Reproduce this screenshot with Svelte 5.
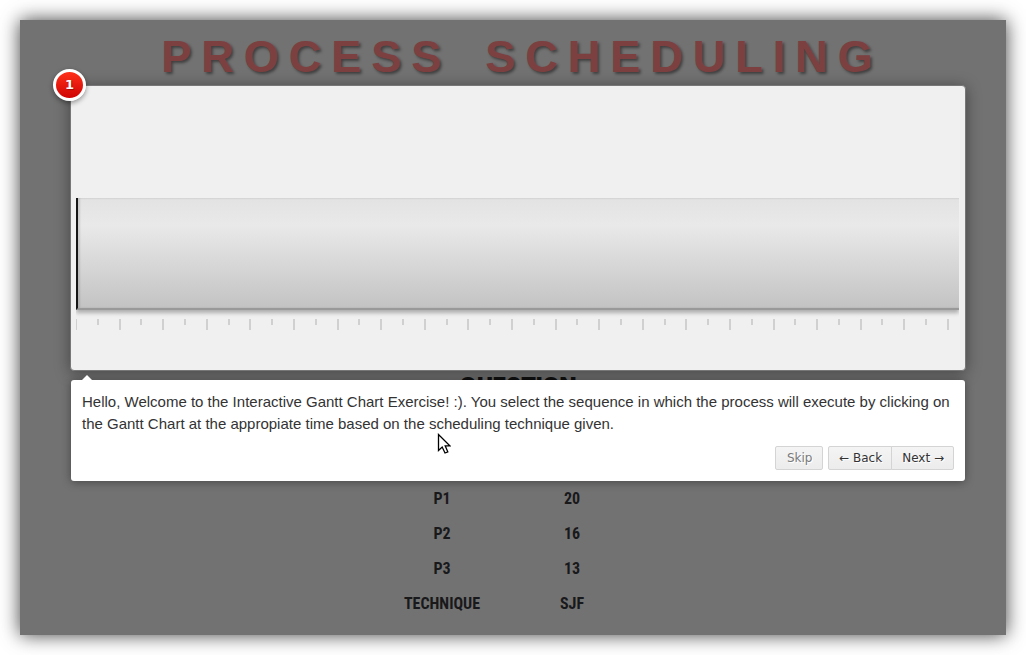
<script>
  const rows = [
    ['P1', '20'],
    ['P2', '16'],
    ['P3', '13'],
    ['TECHNIQUE', 'SJF'],
  ];
  const ticks = Array.from({ length: 41 }, (_, i) => i % 2 === 0);
</script>

<main>
  <h1><span>PROCESS</span> <span>SCHEDULING</span></h1>

  <div class="stage">
    <section class="chart" aria-label="Gantt chart">
      <button class="bar" aria-label="Timeline"></button>
      <div class="scale">
        {#each ticks as major}
          <i class:major></i>
        {/each}
      </div>
    </section>

    <span class="step">1</span>

    <div class="tip" role="dialog" aria-label="Step 1">
      <p>
        Hello, Welcome to the Interactive Gantt Chart Exercise! :). You select the sequence in which
        the process will execute by clicking on the Gantt Chart at the appropiate time based on the
        scheduling technique given.
      </p>
      <div class="actions">
        <button class="skip">Skip</button>
        <div class="pair">
          <button>← Back</button>
          <button>Next →</button>
        </div>
      </div>
    </div>
  </div>

  <h2>QUESTION</h2>
  <table>
    <tbody>
      {#each rows as [name, value]}
        <tr><th scope="row">{name}</th><td>{value}</td></tr>
      {/each}
    </tbody>
  </table>

  <svg class="pointer" width="14" height="22" viewBox="0 0 14 22" aria-hidden="true">
    <path d="M1.5 1.5V17.5L5.2 14L8 20L10.8 18.8L8.2 12.8H12.8Z" fill="#fff" stroke="#000" stroke-width="1.3" />
  </svg>
</main>

<style>
  :global(body) {
    background: #fff;
    font-family: 'Liberation Sans', Arial, sans-serif;
  }
  main {
    position: relative;
    margin: 20px;
    padding: 0 40px 14px 50px;
    background: #727272;
    box-shadow: 0 0 18px rgba(0, 0, 0, 0.75);
    color: #19191b;
  }
  h1 {
    display: flex;
    justify-content: center;
    gap: 34px;
    margin: 0;
    padding: 12px 0 0 8px;
    font-size: 45px;
    line-height: 50px;
    letter-spacing: 10px;
    color: #7c4040;
    text-shadow: 2px 2px 3px rgba(0, 0, 0, 0.45);
  }
  .stage {
    position: relative;
    margin: 3px 0 0;
  }
  .chart {
    box-sizing: border-box;
    padding: 112px 6px 40px 5px;
    border: 1px solid #777;
    border-radius: 4px;
    background: #f0f0f0;
    box-shadow: 0 2px 15px rgba(0, 0, 0, 0.4);
    overflow: hidden;
  }
  .bar {
    display: block;
    width: 100%;
    height: 112px;
    padding: 0;
    border: 0;
    border-left: 2px solid #161616;
    border-bottom: 2px solid #999;
    background: linear-gradient(#dadada, #e3e3e3 2px, #e9e9e9 25%, #c3c3c3);
    box-shadow:
      inset 2px 0 2px rgba(0, 0, 0, 0.12),
      0 3px 4px rgba(0, 0, 0, 0.28);
    clip-path: inset(0 0 -8px 0);
  }
  .scale {
    display: flex;
    justify-content: space-between;
    height: 11px;
    margin-top: 9px;
    padding-right: 10px;
    overflow: hidden;
  }
  .scale i {
    width: 2px;
    height: 6px;
    background: #d0d0d0;
  }
  .scale .major {
    height: 11px;
  }
  .scale i:first-child {
    width: 1px;
  }
  .step {
    position: absolute;
    top: -16px;
    left: -17px;
    box-sizing: border-box;
    width: 33px;
    height: 32px;
    border: 3px solid #fff;
    border-radius: 50%;
    background: linear-gradient(#ff3019, #cf0404);
    box-shadow: 0 2px 5px rgba(0, 0, 0, 0.4);
    color: #fff;
    font: bold 13px/26px 'DejaVu Sans', Verdana, sans-serif;
    text-align: center;
    text-shadow: 1px 1px 1px rgba(0, 0, 0, 0.3);
  }
  .tip {
    position: absolute;
    top: calc(100% + 9px);
    left: 1px;
    right: 1px;
    padding: 11px;
    border-radius: 3px;
    background: #fff;
    box-shadow: 0 1px 10px rgba(0, 0, 0, 0.4);
  }
  .tip::before {
    content: '';
    position: absolute;
    top: -5px;
    left: 11px;
    border: 5px solid transparent;
    border-top: 0;
    border-bottom-color: #fff;
  }
  .tip p {
    margin: 0;
    color: #333;
    font-size: 15px;
    line-height: 22px;
  }
  .actions {
    display: flex;
    justify-content: flex-end;
    gap: 5px;
    padding-top: 11px;
  }
  .pair {
    display: flex;
  }
  .actions button {
    height: 24px;
    padding: 0 9px 0 10px;
    border: 1px solid #d4d4d4;
    border-radius: 2px;
    background: linear-gradient(#f4f4f4, #ececec);
    color: #333;
    font: 12px/20px 'DejaVu Sans', Verdana, sans-serif;
    text-shadow: 1px 1px 0 #fff;
  }
  .actions .skip {
    min-width: 48px;
    color: #7a7a7a;
  }
  .pair button:first-child {
    border-radius: 2px 0 0 2px;
  }
  .pair button:last-child {
    margin-left: -1px;
    border-radius: 0 2px 2px 0;
  }
  h2 {
    margin: 0;
    font: 900 22px/28px Inter, 'Liberation Sans', sans-serif;
    text-align: center;
    color: #111;
  }
  table {
    width: 260px;
    margin: 82px auto 0;
    border-collapse: collapse;
    table-layout: fixed;
    font: bold 16px/35px 'Liberation Sans Narrow', 'Roboto Condensed', 'Liberation Sans', sans-serif;
    text-align: center;
  }
  th,
  td {
    padding: 0 22px 0 0;
  }
  .pointer {
    position: absolute;
    top: 413px;
    left: 417px;
  }
</style>
